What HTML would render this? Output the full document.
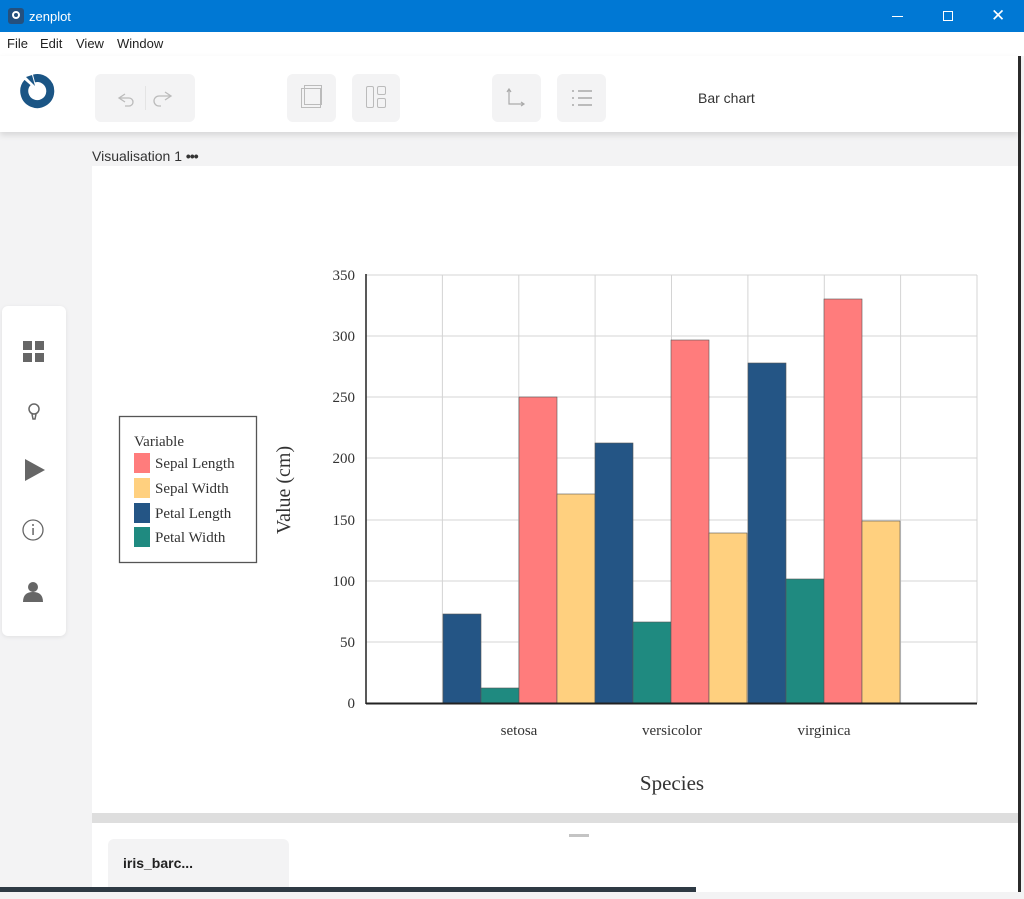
<!DOCTYPE html>
<html><head><meta charset="utf-8"><style>
*{margin:0;padding:0;box-sizing:border-box}
body{width:1024px;height:892px;overflow:hidden;background:#f3f3f4;font-family:"Liberation Sans",sans-serif;position:relative}
.title{position:absolute;left:0;top:0;width:1024px;height:32px;background:#0078d4;color:#fff;font-size:14px}
.menu{position:absolute;left:0;top:32px;width:1024px;height:24px;background:#fff;font-size:13px;color:#222}
.menu span{position:absolute;top:4px}
.tool{position:absolute;left:0;top:56px;width:1018px;height:76px;background:#fff;box-shadow:0 3px 6px rgba(0,0,0,.12)}
.btn{position:absolute;top:18px;height:48px;background:#f3f3f4;border-radius:6px}
.side{position:absolute;left:2px;top:306px;width:64px;height:330px;background:#fff;border-radius:6px;box-shadow:0 1px 4px rgba(0,0,0,.08)}
.panel{position:absolute;left:92px;top:166px;width:926px;height:647px;background:#fff}
.bottom{position:absolute;left:92px;top:823px;width:926px;height:69px;background:#fff}
</style></head><body>
<div class="title">
 <div style="position:absolute;left:8px;top:8px;width:16px;height:16px;background:#24507e;border-radius:3px"></div>
 <div style="position:absolute;left:12px;top:11px;width:8px;height:8px;border:2px solid #fff;border-radius:50%"></div>
 <span style="position:absolute;left:29px;top:9px;font-size:13px">zenplot</span>
 <div style="position:absolute;left:892px;top:16px;width:11px;height:1px;background:#fff"></div>
 <div style="position:absolute;left:943px;top:11px;width:10px;height:10px;border:1px solid #fff"></div>
 <span style="position:absolute;left:991px;top:6px;font-size:17px">✕</span>
</div>
<div class="menu"><span style="left:7px">File</span><span style="left:40px">Edit</span><span style="left:76px">View</span><span style="left:117px">Window</span></div>
<div class="tool">
 <svg style="position:absolute;left:18px;top:17px" width="40" height="40" viewBox="0 0 40 40">
  <path d="M9.5 9.5 A13 13 0 1 0 16 5.5" fill="none" stroke="#1b5585" stroke-width="8"/>
  <path d="M8 4 L14 2 L17 13 Z" fill="#1b5585"/>
 </svg>
 <div class="btn" style="left:95px;width:100px"><div style="position:absolute;left:50px;top:12px;width:1px;height:24px;background:#e4e4e4"></div>
  <svg style="position:absolute;left:12px;top:12px" width="76" height="24"><path d="M18 8 L12 12 L18 16 M12 12 H22 a4 4 0 0 1 0 8 h-4" fill="none" stroke="#bbb" stroke-width="1.3"/><path d="M58 6 L64 10 L58 14 M64 10 H52 a5 5 0 0 0 0 10 h2" fill="none" stroke="#bbb" stroke-width="1.3"/></svg></div>
 <div class="btn" style="left:287px;width:49px"><div style="position:absolute;left:14px;top:14px;width:20px;height:20px;border:1.3px solid #bbb"></div><div style="position:absolute;left:17px;top:11px;width:18px;height:20px;border:1.3px solid #bbb"></div></div>
 <div class="btn" style="left:352px;width:48px"><div style="position:absolute;left:14px;top:12px;width:8px;height:22px;border:1.3px solid #bbb;border-radius:2px"></div><div style="position:absolute;left:25px;top:12px;width:9px;height:9px;border:1.3px solid #bbb;border-radius:2px"></div><div style="position:absolute;left:25px;top:24px;width:9px;height:10px;border:1.3px solid #bbb;border-radius:2px"></div></div>
 <div class="btn" style="left:492px;width:49px"><svg style="position:absolute;left:12px;top:12px" width="24" height="24"><path d="M5 4 V18 H20 M3 6 L5 3 L7 6 M17 16 L20 18 L17 20" fill="none" stroke="#aaa" stroke-width="1.2"/></svg></div>
 <div class="btn" style="left:557px;width:49px"><svg style="position:absolute;left:12px;top:12px" width="24" height="24"><path d="M9 5 H23 M9 12 H23 M9 19 H23 M3 5 H5 M3 12 H5 M3 19 H5" stroke="#bbb" stroke-width="2"/></svg></div>
 <span style="position:absolute;left:698px;top:34px;font-size:14px;color:#333">Bar chart</span>
</div>
<div style="position:absolute;left:1018px;top:56px;width:3px;height:836px;background:#2b2b2b"></div>
<span style="position:absolute;left:92px;top:148px;font-size:14px;color:#333">Visualisation 1 <b style="letter-spacing:-1px">•••</b></span>
<div class="side">
 <svg width="64" height="330">
  <g fill="#666"><rect x="21" y="35" width="9" height="9"/><rect x="33" y="35" width="9" height="9"/><rect x="21" y="47" width="9" height="9"/><rect x="33" y="47" width="9" height="9"/></g>
  <circle cx="32" cy="103" r="5" fill="none" stroke="#666" stroke-width="1.5"/><path d="M30 108 L31 113 H33 L34 108" stroke="#666" stroke-width="1.5" fill="none"/>
  <path d="M23 153 L43 164 L23 175Z" fill="#666"/>
  <circle cx="31" cy="224" r="10" fill="none" stroke="#666" stroke-width="1.3"/><rect x="30.3" y="222" width="1.5" height="7" fill="#666"/><circle cx="31" cy="219" r="1" fill="#666"/>
  <circle cx="31" cy="281" r="5" fill="#666"/><path d="M21 296 Q21 286 31 286 Q41 286 41 296Z" fill="#666"/>
 </svg>
</div>
<div class="panel"></div>
<svg style="position:absolute;left:0;top:0" width="1024" height="892" font-family="Liberation Serif,serif">
 <g stroke="#d4d4d4" stroke-width="1">
  <line x1="366" y1="275" x2="977" y2="275"/><line x1="366" y1="336" x2="977" y2="336"/><line x1="366" y1="397" x2="977" y2="397"/><line x1="366" y1="458" x2="977" y2="458"/><line x1="366" y1="520" x2="977" y2="520"/><line x1="366" y1="581" x2="977" y2="581"/><line x1="366" y1="642" x2="977" y2="642"/>
  <line x1="442.4" y1="275" x2="442.4" y2="703"/><line x1="518.8" y1="275" x2="518.8" y2="703"/><line x1="595.1" y1="275" x2="595.1" y2="703"/><line x1="671.5" y1="275" x2="671.5" y2="703"/><line x1="747.9" y1="275" x2="747.9" y2="703"/><line x1="824.3" y1="275" x2="824.3" y2="703"/><line x1="900.6" y1="275" x2="900.6" y2="703"/><line x1="977" y1="275" x2="977" y2="703"/>
 </g>
 <g stroke="#555" stroke-width="0.6">
  <rect x="443" y="614" width="38" height="89" fill="#245585"/>
  <rect x="481" y="688" width="38" height="15" fill="#1f8a80"/>
  <rect x="519" y="397" width="38" height="306" fill="#ff7c7c"/>
  <rect x="557" y="494" width="38" height="209" fill="#ffd07f"/>
  <rect x="595" y="443" width="38" height="260" fill="#245585"/>
  <rect x="633" y="622" width="38" height="81" fill="#1f8a80"/>
  <rect x="671" y="340" width="38" height="363" fill="#ff7c7c"/>
  <rect x="709" y="533" width="38" height="170" fill="#ffd07f"/>
  <rect x="748" y="363" width="38" height="340" fill="#245585"/>
  <rect x="786" y="579" width="38" height="124" fill="#1f8a80"/>
  <rect x="824" y="299" width="38" height="404" fill="#ff7c7c"/>
  <rect x="862" y="521" width="38" height="182" fill="#ffd07f"/>
 </g>
 <line x1="366" y1="274" x2="366" y2="704" stroke="#222" stroke-width="1.5"/>
 <line x1="366" y1="703.5" x2="977" y2="703.5" stroke="#222" stroke-width="2"/>
 <g font-size="15" fill="#333" text-anchor="end">
  <text x="355" y="280">350</text><text x="355" y="341">300</text><text x="355" y="402">250</text><text x="355" y="463">200</text><text x="355" y="525">150</text><text x="355" y="586">100</text><text x="355" y="647">50</text><text x="355" y="708">0</text>
 </g>
 <g font-size="15" fill="#333" text-anchor="middle"><text x="519" y="735">setosa</text><text x="672" y="735">versicolor</text><text x="824" y="735">virginica</text></g>
 <text x="672" y="790" font-size="21" fill="#333" text-anchor="middle">Species</text>
 <text transform="translate(290,490) rotate(-90)" font-size="20" fill="#333" text-anchor="middle">Value (cm)</text>
 <rect x="119.5" y="416.5" width="137" height="146" fill="#fff" stroke="#555" stroke-width="1.3"/>
 <text x="134" y="446" font-size="15" fill="#333">Variable</text>
 <rect x="134" y="453" width="16" height="20" fill="#ff7c7c"/><text x="155" y="468" font-size="15" fill="#333">Sepal Length</text>
 <rect x="134" y="478" width="16" height="20" fill="#ffd07f"/><text x="155" y="493" font-size="15" fill="#333">Sepal Width</text>
 <rect x="134" y="503" width="16" height="20" fill="#245585"/><text x="155" y="518" font-size="15" fill="#333">Petal Length</text>
 <rect x="134" y="527" width="16" height="20" fill="#1f8a80"/><text x="155" y="542" font-size="15" fill="#333">Petal Width</text>
</svg>
<div style="position:absolute;left:92px;top:813px;width:926px;height:10px;background:#dedede"></div>
<div class="bottom">
 <div style="position:absolute;left:477px;top:11px;width:20px;height:3px;background:#c4c4c4"></div>
 <div style="position:absolute;left:16px;top:16px;width:181px;height:60px;background:#f3f3f4;border-radius:6px"><span style="position:absolute;left:15px;top:16px;font-size:14px;font-weight:bold;color:#222">iris_barc...</span></div>
</div>
<div style="position:absolute;left:0;top:887px;width:696px;height:5px;background:#2e3a44"></div>
</body></html>
